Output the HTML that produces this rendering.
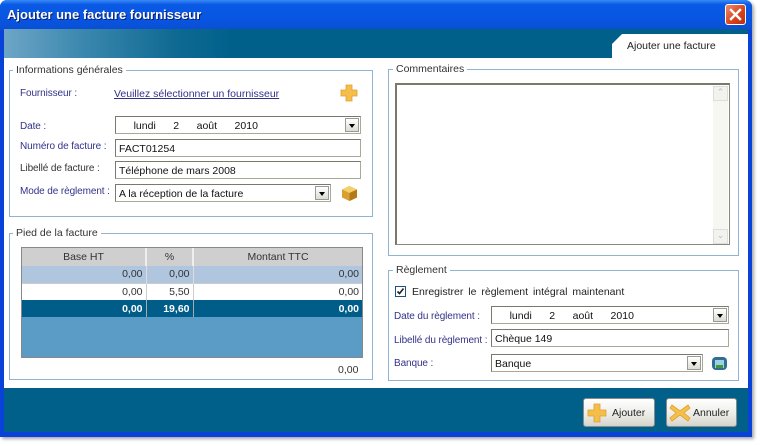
<!DOCTYPE html>
<html><head><meta charset="utf-8"><style>
*{margin:0;padding:0;box-sizing:border-box}
body{width:760px;height:446px;background:#fff;position:relative;overflow:hidden;font-family:"Liberation Sans",sans-serif;font-size:10.5px;color:#222}
.a{position:absolute;white-space:nowrap}
.win{left:0;top:0;width:752px;height:437px;background:#0842d8;border-radius:7px 7px 0 0;box-shadow:2px 2px 3px rgba(0,0,0,.35)}
.title{left:0;top:0;width:752px;height:30px;border-radius:7px 7px 0 0;background:linear-gradient(#3a8cf6 0,#0a5ae6 15%,#0854e0 70%,#0a4fd0 100%)}
.tt{left:7px;top:7px;color:#fff;font-weight:bold;font-size:13px;text-shadow:1px 1px 0 #0a1f6a}
.close{left:725px;top:4px;width:21px;height:21px;border:1px solid #fff;border-radius:3px;background:linear-gradient(135deg,#f08a6a,#d8401a 60%,#b8300e)}
.band{left:4px;top:29px;width:744px;height:29px;background:linear-gradient(90deg,#6ea5c6 0,#3a87ae 80px,#0f6a92 170px,#00608a 230px,#00608a)}
.tab{left:612px;top:34px;width:136px;height:24px;background:#fff;clip-path:polygon(10px 0,100% 0,100% 100%,0 100%,0 10px)}
.content{left:4px;top:58px;width:744px;height:331px;background:#fff}
.bot{left:4px;top:388px;width:744px;height:44px;background:#00608a}
.grp{border:1px solid #8fb4d0}
.gl{background:#fff;padding:0 3px;color:#333}
.lb{color:#32328a;font-size:10px;letter-spacing:-0.1px}
.fld{background:#fff;border:1px solid #a9a99a;border-top-color:#7a7a6c;border-left-color:#7a7a6c;height:18px;padding:3px 3px 0;color:#111;white-space:pre}
.dd{position:absolute;right:1px;top:1px;width:14px;height:14px;background:linear-gradient(#fff,#dcdcd4);border:1px solid #999}
.dd:after{content:"";position:absolute;left:3px;top:5px;border-left:3px solid transparent;border-right:3px solid transparent;border-top:4px solid #000}
table{border-collapse:collapse;font-size:10.5px}
td{height:17px;padding:0 3px;text-align:right}
.btn{height:29px;border:1px solid #8a8a8a;border-radius:3px;background:linear-gradient(#fff,#ebebe6 60%,#d4d4cc);color:#222}
</style></head><body>
<div class="a win"></div>
<div class="a title"></div>
<div class="a tt">Ajouter une facture fournisseur</div>
<div class="a close"><svg width="19" height="19" viewBox="0 0 19 19"><path d="M5 5L14 14M14 5L5 14" stroke="#fff" stroke-width="2.4" stroke-linecap="square"/></svg></div>
<div class="a band"></div>
<div class="a tab"><span class="a" style="left:15px;top:6px;color:#222">Ajouter une facture</span></div>
<div class="a content"></div>
<div class="a bot"></div>

<div class="a grp" style="left:9px;top:70px;width:364px;height:147px"></div>
<div class="a gl" style="left:13px;top:64px">Informations générales</div>
<div class="a lb" style="left:20px;top:88px">Fournisseur :</div>
<div class="a" style="left:114px;top:88px;color:#32328a;text-decoration:underline">Veuillez sélectionner un fournisseur</div>
<svg class="a" style="left:340px;top:84px" width="18" height="18" viewBox="0 0 18 18"><path d="M6 1h6v5h5v6h-5v5H6v-5H1V6h5z" fill="#f5be4a" stroke="#e0a030" stroke-width=".8"/></svg>
<div class="a lb" style="left:20px;top:121px">Date :</div>
<div class="a fld" style="left:115px;top:116px;width:246px">     lundi      2      août      2010<span class="dd"></span></div>
<div class="a lb" style="left:20px;top:141px">Numéro de facture :</div>
<div class="a fld" style="left:115px;top:139px;width:246px">FACT01254</div>
<div class="a lb" style="left:20px;top:163px;color:#333">Libellé de facture :</div>
<div class="a fld" style="left:115px;top:161px;width:246px">Téléphone de mars 2008</div>
<div class="a lb" style="left:20px;top:186px">Mode de règlement :</div>
<div class="a fld" style="left:115px;top:184px;width:216px">A la réception de la facture<span class="dd"></span></div>
<svg class="a" style="left:341px;top:185px" width="17" height="17" viewBox="0 0 17 17"><path d="M8.5 1L16 4.5v8L8.5 16 1 12.5v-8z" fill="#d9a030"/><path d="M1 4.5L8.5 8 16 4.5 8.5 1z" fill="#f4cf6a"/><path d="M8.5 8v8L16 12.5v-8z" fill="#b57a18"/></svg>

<div class="a grp" style="left:9px;top:233px;width:364px;height:147px"></div>
<div class="a gl" style="left:13px;top:227px">Pied de la facture</div>
<div class="a" style="left:21px;top:247px;width:342px;height:111px;background:#5a9cc6;border:1px solid #888">
<table style="width:340px">
<tr style="background:#cfcfcf;color:#333"><td style="width:124px;text-align:center;border-right:2px solid #eee;height:18px">Base HT</td><td style="width:47px;text-align:center;border-right:2px solid #eee">%</td><td style="text-align:center">Montant TTC</td></tr>
<tr style="background:#b0c6de;color:#333"><td style="border-right:1px solid #ddd">0,00</td><td style="border-right:1px solid #ddd">0,00</td><td>0,00</td></tr>
<tr style="background:#fff;color:#333;border-top:1px solid #ccc"><td style="border-right:1px solid #ccc">0,00</td><td style="border-right:1px solid #ccc">5,50</td><td>0,00</td></tr>
<tr style="background:#005d89;color:#fff;font-weight:bold"><td style="border-right:1px solid #aaa">0,00</td><td style="border-right:1px solid #aaa">19,60</td><td>0,00</td></tr>
</table></div>
<div class="a" style="left:338px;top:364px;color:#333">0,00</div>

<div class="a grp" style="left:388px;top:69px;width:351px;height:187px"></div>
<div class="a gl" style="left:393px;top:63px">Commentaires</div>
<div class="a" style="left:395px;top:83px;width:335px;height:162px;border:1px solid #8a8a7a;border-top:2px solid #7a7a6a;border-left:2px solid #7a7a6a;background:#fff"></div>
<div class="a" style="left:713px;top:86px;width:15px;height:157px;background:#f7f7f2"></div>
<div class="a" style="left:713px;top:86px;width:15px;height:15px;border:1px solid #ddd;background:#f2f2ee;color:#bbb;font-size:9px;text-align:center">⌃</div>
<div class="a" style="left:713px;top:229px;width:15px;height:15px;border:1px solid #ddd;background:#f2f2ee;color:#bbb;font-size:9px;text-align:center">⌄</div>

<div class="a grp" style="left:388px;top:270px;width:351px;height:111px"></div>
<div class="a gl" style="left:393px;top:264px">Règlement</div>
<div class="a" style="left:395px;top:286px;width:11px;height:11px;border:1px solid #1c5180;background:#fff"><svg width="9" height="9" viewBox="0 0 9 9" style="position:absolute;left:0;top:0"><path d="M1.5 4.5l2 2 4-5" stroke="#222" stroke-width="1.6" fill="none"/></svg></div>
<div class="a" style="left:412px;top:286px;color:#222;word-spacing:2px">Enregistrer le règlement intégral maintenant</div>
<div class="a lb" style="left:394px;top:311px">Date du règlement :</div>
<div class="a fld" style="left:491px;top:306px;width:238px">     lundi      2      août      2010<span class="dd"></span></div>
<div class="a lb" style="left:394px;top:335px">Libellé du règlement :</div>
<div class="a fld" style="left:491px;top:329px;width:238px">Chèque 149</div>
<div class="a lb" style="left:394px;top:358px">Banque :</div>
<div class="a fld" style="left:491px;top:354px;width:212px">Banque<span class="dd"></span></div>
<svg class="a" style="left:711px;top:355px" width="17" height="16" viewBox="0 0 17 16"><rect x="1" y="2" width="15" height="13" rx="4" fill="#2f6f8f"/><rect x="4" y="5" width="9" height="8" fill="#9fd0e6"/><path d="M5 10h7v3H5z" fill="#3c9a3c"/></svg>

<div class="a btn" style="left:583px;top:398px;width:72px"><svg class="a" style="left:3px;top:4px" width="20" height="20" viewBox="0 0 20 20"><path d="M7 1h6v6h6v6h-6v6H7v-6H1V7h6z" fill="#f5be4a" stroke="#e0a030" stroke-width=".8"/></svg><span class="a" style="left:28px;top:8px">Ajouter</span></div>
<div class="a btn" style="left:666px;top:398px;width:71px"><svg class="a" style="left:2px;top:4px" width="22" height="20" viewBox="0 0 22 20"><path d="M3 2l8 6 8-6 2 3-6 5 6 5-2 3-8-6-8 6-2-3 6-5-6-5z" fill="#f5c04a" stroke="#e0a030" stroke-width=".8"/></svg><span class="a" style="left:26px;top:8px">Annuler</span></div>
</body></html>
